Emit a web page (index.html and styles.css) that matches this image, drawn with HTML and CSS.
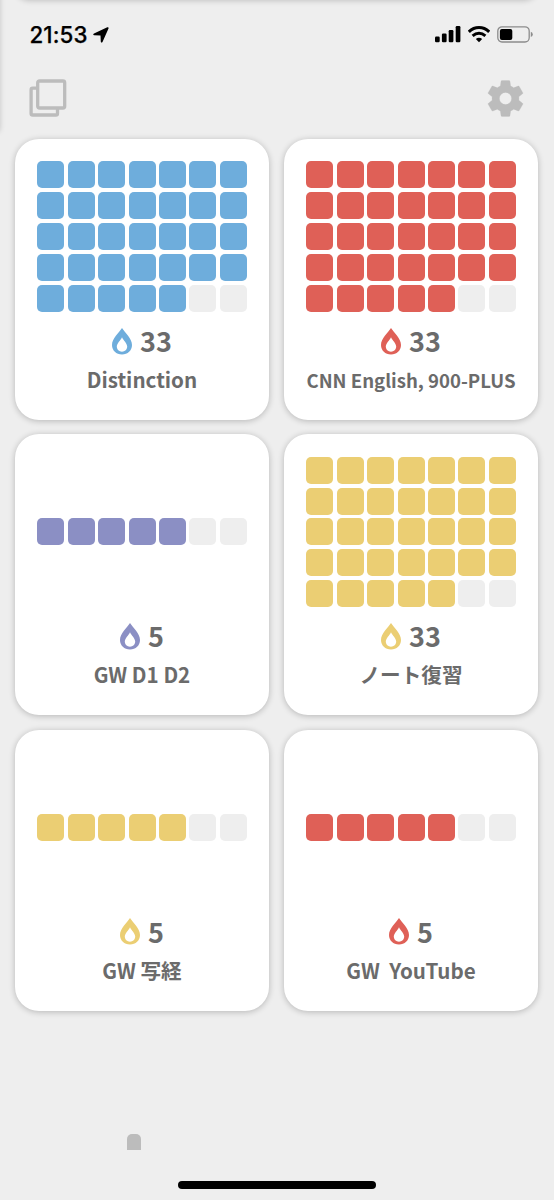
FILE: index.html
```html
<!DOCTYPE html>
<html lang="ja">
<head>
<meta charset="utf-8">
<title>Habits</title>
<link rel="stylesheet" href="styles.css">
</head>
<body>
<svg class="defs" width="0" height="0">
  <symbol id="drop" viewBox="0 0 20 27">
    <path fill="currentColor" fill-rule="evenodd" d="M10 0C13 4.500 20 10.600 20 17C20 22.600 15.700 26.500 10 26.500S0 22.600 0 17C0 10.600 7 4.500 10 0ZM10 9.200C8.700 12.200 4.800 15.200 4.800 18.600C4.800 21.600 7.100 23.700 10 23.700S15.200 21.600 15.200 18.600C15.200 15.200 11.300 12.200 10 9.200Z"/>
  </symbol>
</svg>
<div class="screen">
  <div class="edge edge-top"></div>
  <div class="edge edge-left"></div>
  <header class="status">
    <div class="clock">
      <span>21:53</span>
      <svg width="16" height="16" viewBox="0 0 16 16"><path d="M14.300 .3Q16 -.1 15.500 1.600L9.500 15Q8.300 16.300 7.800 14.700L7.500 8.500L1.200 8.200Q-.6 7.600 1 6.500Z"/></svg>
    </div>
    <div class="indicators">
      <svg width="26" height="17" viewBox="0 0 26 17"><rect x="0" y="10.500" width="4.700" height="5.700" rx="1.200"/><rect x="6.900" y="7.500" width="4.700" height="8.700" rx="1.200"/><rect x="13.700" y="4" width="4.700" height="12.200" rx="1.200"/><rect x="20.700" y="0" width="4.700" height="16.200" rx="1.200"/></svg>
      <svg width="22" height="17" viewBox="0 0 22 17"><g fill="none" stroke="#000" stroke-width="3"><path d="M.8 5.900Q5.200 1.600 11 1.600T21.200 5.900"/><path d="M4.600 9.900Q7.600 7.300 11 7.300T17.400 9.900"/></g><path d="M7.800 13Q11 10.400 14.200 13L11 16.300Z"/></svg>
      <svg width="36" height="17" viewBox="0 0 36 17"><rect x=".8" y=".8" width="31.400" height="15.200" rx="4.200" fill="none" stroke="#8c8c8c" stroke-width="1.300"/><rect x="2.900" y="2.900" width="12.400" height="11" rx="2"/><path fill="#8c8c8c" d="M33.800 5.800Q35.800 6.500 35.800 8.400T33.800 11Z"/></svg>
    </div>
  </header>
  <nav class="toolbar">
    <svg width="38" height="38" viewBox="0 0 38 38"><g fill="none" stroke="#bcbcbc" stroke-width="3.300"><rect x="8.700" y="2" width="27" height="27" rx="1.800"/><path d="M8.700 9.200H3.700Q2.100 9.200 2.100 10.800V34.400Q2.100 36 3.700 36H26.900Q28.500 36 28.500 34.400V29"/></g></svg>
    <svg class="gear" width="43" height="43" viewBox="0 0 24 24"><path fill="#bcbcbc" stroke="#bcbcbc" stroke-width=".15" d="M19.430 12.980c.04-.32.07-.64.07-.98s-.03-.66-.07-.98l2.110-1.650c.19-.15.24-.42.12-.64l-2-3.460c-.12-.22-.39-.3-.61-.22l-2.490 1c-.52-.4-1.080-.73-1.690-.98l-.38-2.650C14.460 2.180 14.250 2 14 2h-4c-.25 0-.46.18-.49.42l-.38 2.650c-.61.25-1.170.59-1.690.98l-2.490-1c-.23-.09-.49 0-.61.22l-2 3.460c-.13.22-.07.49.12.64l2.110 1.650c-.04.32-.07.65-.07.98s.03.66.07.98l-2.110 1.650c-.19.15-.24.42-.12.64l2 3.460c.12.22.39.3.61.22l2.490-1c.52.4 1.080.73 1.690.98l.38 2.650c.03.24.24.42.49.42h4c.25 0 .46-.18.49-.42l.38-2.650c.61-.25 1.170-.59 1.690-.98l2.490 1c.23.09.49 0 .61-.22l2-3.460c.12-.22.07-.49-.12-.64l-2.110-1.650zM12 15.400a3.400 3.400 0 1 1 0-6.800a3.400 3.400 0 0 1 0 6.800z"/></svg>
  </nav>
  <main class="cards">
    <section class="card blue">
      <div class="days"><div class="grid">
        <i></i><i></i><i></i><i></i><i></i><i></i><i></i>
        <i></i><i></i><i></i><i></i><i></i><i></i><i></i>
        <i></i><i></i><i></i><i></i><i></i><i></i><i></i>
        <i></i><i></i><i></i><i></i><i></i><i></i><i></i>
        <i></i><i></i><i></i><i></i><i></i><i class="off"></i><i class="off"></i>
      </div></div>
      <div class="streak"><svg><use href="#drop"/></svg><span>33</span></div>
      <h2 class="name">Distinction</h2>
    </section>
    <section class="card red">
      <div class="days"><div class="grid">
        <i></i><i></i><i></i><i></i><i></i><i></i><i></i>
        <i></i><i></i><i></i><i></i><i></i><i></i><i></i>
        <i></i><i></i><i></i><i></i><i></i><i></i><i></i>
        <i></i><i></i><i></i><i></i><i></i><i></i><i></i>
        <i></i><i></i><i></i><i></i><i></i><i class="off"></i><i class="off"></i>
      </div></div>
      <div class="streak"><svg><use href="#drop"/></svg><span>33</span></div>
      <h2 class="name long">CNN English, 900-PLUS</h2>
    </section>
    <section class="card purple">
      <div class="days"><div class="grid">
        <i></i><i></i><i></i><i></i><i></i><i class="off"></i><i class="off"></i>
      </div></div>
      <div class="streak"><svg><use href="#drop"/></svg><span>5</span></div>
      <h2 class="name">GW D1 D2</h2>
    </section>
    <section class="card yellow">
      <div class="days"><div class="grid">
        <i></i><i></i><i></i><i></i><i></i><i></i><i></i>
        <i></i><i></i><i></i><i></i><i></i><i></i><i></i>
        <i></i><i></i><i></i><i></i><i></i><i></i><i></i>
        <i></i><i></i><i></i><i></i><i></i><i></i><i></i>
        <i></i><i></i><i></i><i></i><i></i><i class="off"></i><i class="off"></i>
      </div></div>
      <div class="streak"><svg><use href="#drop"/></svg><span>33</span></div>
      <h2 class="name">ノート復習</h2>
    </section>
    <section class="card yellow">
      <div class="days"><div class="grid">
        <i></i><i></i><i></i><i></i><i></i><i class="off"></i><i class="off"></i>
      </div></div>
      <div class="streak"><svg><use href="#drop"/></svg><span>5</span></div>
      <h2 class="name">GW 写経</h2>
    </section>
    <section class="card red">
      <div class="days"><div class="grid">
        <i></i><i></i><i></i><i></i><i></i><i class="off"></i><i class="off"></i>
      </div></div>
      <div class="streak"><svg><use href="#drop"/></svg><span>5</span></div>
      <h2 class="name">GW  YouTube</h2>
    </section>
  </main>
  <footer class="bottom">
    <div class="tab"></div>
    <div class="home"></div>
  </footer>
</div>
</body>
</html>
```
FILE: styles.css
```css
* { box-sizing: border-box; }
body { margin: 0; background: #eee; font-family: "Noto Sans CJK JP", sans-serif; }
svg { display: block; }
.defs { position: absolute; }
.screen { position: relative; width: 554px; height: 1200px; overflow: hidden; display: flex; flex-direction: column; }
.edge { position: absolute; box-shadow: 0 1px 6px rgba(0,0,0,.24); background: #eee; }
.edge-top { left: 15px; top: -30px; width: 523px; height: 29px; border-radius: 24px; }
.edge-left { left: -30px; top: -10px; width: 29px; height: 140px; }

.status { height: 68px; padding: 26px 21px 0 29.500px; display: flex; justify-content: space-between; align-items: flex-start; }
.clock { display: flex; align-items: center; height: 17px; gap: 5px; font: 500 22.300px/17px Inter, sans-serif; letter-spacing: .1px; -webkit-text-stroke: .25px #000; }
.indicators { display: flex; align-items: center; gap: 7px; }

.toolbar { height: 71px; padding: 11px 26px 0 29px; display: flex; justify-content: space-between; align-items: flex-start; }
.gear { margin-top: -2px; margin-right: 1px; }

.cards { display: grid; grid-template-columns: 254px 254px; grid-auto-rows: 281px; gap: 14.400px 15px; padding: 0 15px; }
.card { background: #fff; border-radius: 24px; padding-top: 22px; box-shadow: 0 1px 6px rgba(0,0,0,.24); color: var(--c); }
.days { height: 151px; display: flex; align-items: center; justify-content: center; }
.grid { display: grid; grid-template-columns: repeat(7, 27px); grid-auto-rows: 27px; gap: 3.850px 3.450px; }
.grid i { background: currentColor; border-radius: 5px; }
.grid i.off { background: #eee; }
.streak { height: 44px; margin-top: 7px; display: flex; align-items: center; justify-content: center; gap: 8px; font-size: 27px; line-height: 42px; font-weight: 700; }
.streak svg { width: 20px; height: 27px; }
.streak span { color: #6b6b6b; }
.name { margin: 0; font-size: 20.600px; line-height: 33px; font-weight: 700; color: #6b6b6b; text-align: center; white-space: pre; }
.long { font-size: 18.600px; }
.blue { --c: #6eaddc; }
.red { --c: #df6057; }
.purple { --c: #8b8fc4; }
.yellow { --c: #ebce73; }

.bottom { flex: 1; display: flex; flex-direction: column; padding-top: 123.200px; }
.tab { width: 14px; height: 16px; margin-left: 127px; border-radius: 5px 5px 0 0; background: #bcbcbc; }
.home { width: 198px; height: 8px; margin: 31px 0 0 178px; border-radius: 4px; background: #000; }
```
